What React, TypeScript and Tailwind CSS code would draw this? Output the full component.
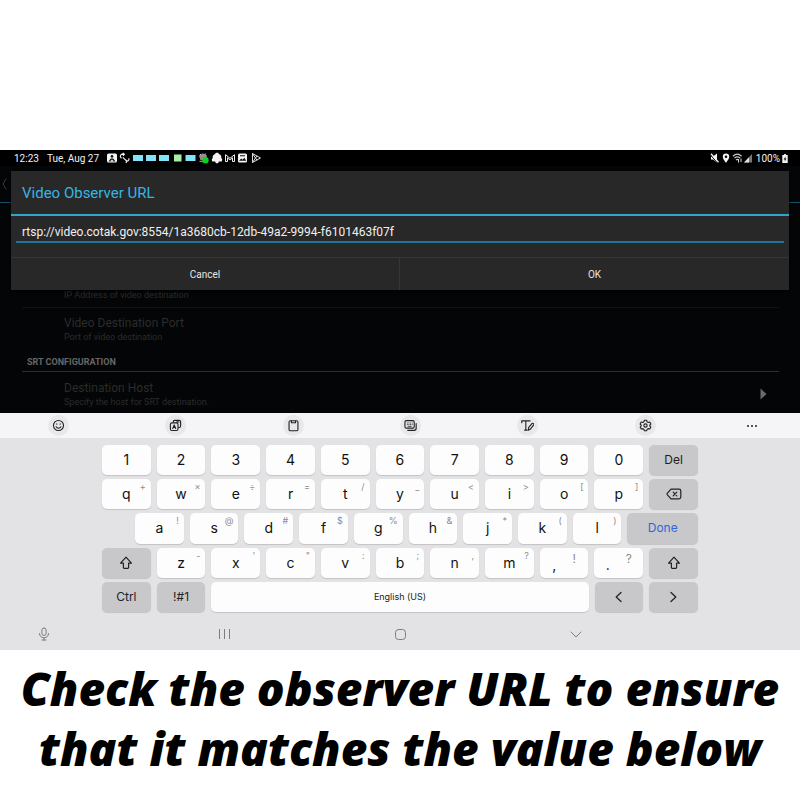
import React from "react";

type KeyDef = { label: string; hint?: string };

const digits: KeyDef[] = "1234567890".split("").map((label) => ({ label }));

const pair = (letters: string, hints: string[]): KeyDef[] =>
  letters.split("").map((label, i) => ({ label, hint: hints[i] }));

const topRow = pair("qwertyuiop", ["+", "×", "÷", "=", "/", "_", "<", ">", "[", "]"]);
const homeRow = pair("asdfghjkl", ["!", "@", "#", "$", "%", "&", "*", "(", ")"]);
const bottomRow = pair("zxcvbnm", ["-", "'", "\"", ":", ";", ",", "?"]);

const keyBase =
  "relative flex items-center justify-center rounded-[5px] shadow-[0_1px_1px_rgba(0,0,0,0.14)]";
const keyUnit = "w-[calc((100%-60px)/11)] shrink-0";

function Key({ label, hint }: KeyDef) {
  return (
    <button type="button" className={`${keyBase} ${keyUnit} bg-[#fdfdfe] text-[14px] leading-none text-[#111]`}>
      {label}
      {hint && <span className="absolute right-[5px] top-[3px] text-[9px] leading-none text-[#8c8c8e]">{hint}</span>}
    </button>
  );
}

function PunctuationKey({ label, hint }: KeyDef) {
  return (
    <button
      type="button"
      className={`${keyBase} ${keyUnit} gap-4 bg-[#fdfdfe] text-[14px] leading-none text-[#111]`}
    >
      <span className="pt-1">{label}</span>
      <span className="pb-2 text-[12px] text-[#8c8c8e]">{hint}</span>
    </button>
  );
}

function DarkKey({
  children,
  label,
  grow,
  accent,
}: {
  children: React.ReactNode;
  label?: string;
  grow?: boolean;
  accent?: boolean;
}) {
  return (
    <button
      type="button"
      aria-label={label}
      className={`${keyBase} ${grow ? "flex-1" : keyUnit} ${
        accent ? "text-[#2f66dd]" : "text-[#222]"
      } bg-[#c8c8ca] text-[12px] leading-none`}
    >
      {children}
    </button>
  );
}

const stroke = {
  fill: "none",
  stroke: "currentColor",
  strokeLinecap: "round",
  strokeLinejoin: "round",
} as const;

const ShiftIcon = () => (
  <svg viewBox="0 0 14 14" className="size-3.5" {...stroke} strokeWidth="1.2">
    <path d="M7 1.2 12.4 7.2H9.6V11.6a.8.8 0 0 1-.8.8H5.2a.8.8 0 0 1-.8-.8V7.2H1.6Z" />
  </svg>
);

const toolIcons: { name: string; art: React.ReactNode }[] = [
  {
    name: "Emoji",
    art: (
      <>
        <circle cx="7" cy="7" r="5.4" />
        <path d="M4.4 8.4c.6 1 1.500 1.500 2.600 1.500s2-.5 2.600-1.500" />
        <path d="M5.200 5.200v.5M8.800 5.200v.5" />
      </>
    ),
  },
  {
    name: "Translate",
    art: (
      <>
        <path d="M4.600 3.600V3c0-.9.600-1.500 1.500-1.500h4.900c.9 0 1.500.600 1.500 1.500v4.600c0 .9-.600 1.500-1.500 1.500h-.6" />
        <rect x="1.500" y="4.200" width="8.200" height="8.200" rx="1.600" />
        <path d="M4 10.200 5.600 6.400 7.200 10.200M4.500 9.200h2.200M8 3.300h2.700M9.400 2.700v.6" />
      </>
    ),
  },
  {
    name: "Clipboard",
    art: (
      <>
        <rect x="2.200" y="1.900" width="9.600" height="10.800" rx="1.500" />
        <path d="M4.800 2.100v1.900h4.400V2.100" />
      </>
    ),
  },
  {
    name: "Keyboard modes",
    art: (
      <>
        <rect x="1" y="1.800" width="10" height="8" rx="1.500" />
        <path d="M4 12.200h6.900c1.300 0 2.200-.9 2.200-2.200V4.800" />
        <path d="M3.500 4.300h.2M5.200 4.300h.2M6.900 4.300h.2M8.700 4.300h.2M3.500 6h.2M5.200 6h.2M6.900 6h.2M8.700 6h.2M4.400 7.900h3.400" strokeWidth="0.900" />
      </>
    ),
  },
  {
    name: "Handwriting",
    art: (
      <>
        <path d="M.8 4V2h9M5.200 2v10M3.900 12h2.700" />
        <path d="m7.800 12 .5-2.900 3.500-4.200c1.100-.8 2.500.5 1.700 1.600l-3.600 4.600Z" />
      </>
    ),
  },
  {
    name: "Settings",
    art: (
      <>
        <path d="M5.800 1.300h2.400l.5 1.700 1.200.7 1.700-.4 1.200 2.100L11.600 6.600v.9l1.200 1.200-1.200 2.100-1.700-.4-1.200.7-.5 1.600H5.800l-.5-1.600-1.200-.7-1.700.4-1.200-2.100 1.200-1.200v-.9L1.200 5.400l1.200-2.100 1.700.4L5.300 3Z" />
        <circle cx="7" cy="7" r="1.800" />
      </>
    ),
  },
];

function StatusBar() {
  return (
    <div className="flex h-4 items-center justify-between bg-black pl-3.5 pr-3 font-[Roboto,sans-serif] text-[10px] text-[#f2f2f2]">
      <div className="flex items-center">
        <span className="w-[33px]">12:23</span>
        <span className="w-[59px]">Tue, Aug 27</span>
        <svg viewBox="0 0 156 12" className="h-3 w-[156px]" aria-hidden="true">
          <rect x="1" y="1.500" width="10" height="9" rx="1.500" fill="#f4f4f4" />
          <circle cx="6" cy="4.400" r="1.300" fill="#111" />
          <path d="M2.500 9.500 4.700 6.500h2.600L9.500 9.500Z" fill="#111" />
          <path d="m3.900 9.500 2.100-2 2 2" fill="#f4f4f4" />
          <path
            d="M15.500 6.200c-1.600-1-1.500-3.200.2-4l2.500.2M16.800 1 18.300 2.400 17 3.900M16.800 5.400l4 3.800c1.600-.1 2.500-1.500 2-3M20.500 7.800l.3 1.500-1 1.500"
            fill="none"
            stroke="#eee"
            strokeWidth="1.200"
          />
          <path d="M27 3h10v6H27zM40 3h10v6H40zM53 3h10v6H53zM79.500 3h10v6h-10z" fill="#83e3fb" />
          <path d="M68 2.500h7.500v7H68z" fill="#a9f0a4" />
          <path d="M93 3.600 97 1.200l4 2.200-1 4.600h-5.600Z" fill="#8e8e8e" />
          <path d="m94 2 1.500 1.500M99.700 1.500l-1 1.600M93.500 9.300h5" stroke="#bbb" strokeWidth="1" />
          <circle cx="99.500" cy="8.300" r="3.200" fill="#0bd21c" />
          <path
            d="M111 .8c1.100 0 1.900.6 2.200 1.500 1.600.4 2.300 1.800 2.100 3.400l1 2-.6 1.700h-2.900c-.2 1.300-.9 1.900-1.800 1.900s-1.600-.6-1.800-1.900h-2.900l-.6-1.700 1-2c-.2-1.600.5-3 2.100-3.400.3-.9 1.100-1.500 2.200-1.500Z"
            fill="#f4f4f4"
          />
          <path
            d="M119.500 9.500V2.700l4.500 3.600 4.500-3.600v6.800h-2V5.800L124 8l-2.500-2.200v3.700Z"
            fill="none"
            stroke="#eee"
            strokeWidth="1"
            strokeLinejoin="round"
          />
          <rect x="132" y="1.500" width="9" height="9" rx="1.500" fill="#f4f4f4" />
          <path d="m133 8.800 2.200-2.300 1.400 1.200 1.700-2 2 3.100ZM134 3.300h5v1h-5z" fill="#111" />
          <path d="M146.500 1.500v9l8-4.500ZM146.500 1.500l4.500 6.700M146.500 10.500 151 3.800" fill="none" stroke="#ddd" strokeWidth="1" />
        </svg>
      </div>
      <div className="flex items-center gap-[2px]">
        <svg viewBox="0 0 44 12" className="h-3 w-11" aria-hidden="true">
          <path d="M1 4.500h2L7 1.500v9L3 7.500H1Z" fill="#f4f4f4" />
          <path d="M0 2.500 8 11.500" stroke="#000" strokeWidth="1" />
          <path d="m1 1.800 7.500 8.500" stroke="#f4f4f4" strokeWidth="1.300" />
          <path
            d="M16 1.500a3.200 3.200 0 0 1 3.200 3.200c0 2.300-3.200 6-3.200 6s-3.200-3.700-3.200-6A3.200 3.200 0 0 1 16 1.500Zm0 2a1.300 1.300 0 1 0 0 2.600 1.300 1.300 0 0 0 0-2.600Z"
            fill="#f4f4f4"
          />
          <path d="M23 4.200c2.600-2.400 6-2.400 8.600 0M24.500 6.100c1.700-1.500 4-1.500 5.700 0M26 8c.8-.7 1.900-.7 2.600 0" fill="none" stroke="#c8c8c8" strokeWidth="1.200" />
          <path d="M28.500 7v3.500M31 6.500V10" stroke="#ddd" strokeWidth="1" />
          <path d="M42 2v8.500h-8Z" fill="#777" />
          <path d="M39 5.200v5.300h-5Z" fill="#e0e0e0" />
        </svg>
        <span>100%</span>
        <svg viewBox="0 0 6 10" className="h-[9px] w-[6px]" aria-hidden="true">
          <path d="M2 0h2v1h2v9H0V1h2Z" fill="#f4f4f4" />
          <path d="M3.600 2.500 1.500 6h1.300v2.300L4.600 5H3.300Z" fill="#111" />
        </svg>
      </div>
    </div>
  );
}

function SettingsScreen() {
  return (
    <div className="flex h-full flex-col font-[Roboto,sans-serif] text-[#2b2c2d]">
      <div className="flex h-[37px] items-center border-b border-[#155068] pl-[2px]">
        <svg viewBox="0 0 5 12" className="h-3 w-[5px]" {...stroke} stroke="#3a3a3a" aria-hidden="true">
          <path d="M4 1 1 6l3 5" />
        </svg>
      </div>
      <div className="mt-auto pl-[22px] pr-[21px]">
        <div className="border-b border-[#101112] pb-[6px] pl-[42px] text-[9px] leading-3">
          IP Address of video destination
        </div>
        <div className="pl-[42px] pt-[7px]">
          <div className="text-[12px] leading-4">Video Destination Port</div>
          <div className="text-[9px] leading-3">Port of video destination</div>
        </div>
        <h2 className="mt-[13px] border-b border-[#2e2f30] pb-[3px] pl-[5px] text-[9px] font-bold leading-3 text-[#666768]">
          SRT CONFIGURATION
        </h2>
        <div className="flex items-center justify-between pb-[5px] pl-[42px] pr-3 pt-2">
          <div>
            <div className="text-[12px] leading-4">Destination Host</div>
            <div className="text-[9px] leading-3">Specify the host for SRT destination.</div>
          </div>
          <svg viewBox="0 0 7 12" className="h-3 w-[7px]" aria-hidden="true">
            <path d="M.5.5 6.500 6l-6 5.500Z" fill="#6a6a6a" />
          </svg>
        </div>
      </div>
    </div>
  );
}

function UrlDialog() {
  return (
    <form
      role="dialog"
      aria-labelledby="dialog-title"
      onSubmit={(e) => e.preventDefault()}
      className="absolute inset-x-[11px] top-[5px] bg-[#282828] font-[Roboto,sans-serif] shadow-[0_1px_3px_rgba(0,0,0,0.8)]"
    >
      <label
        id="dialog-title"
        htmlFor="observer-url"
        className="flex h-[45px] items-center border-b-2 border-[#33a4cb] pl-[11px] pt-[2px] text-[15px] text-[#35b5e5]"
      >
        Video Observer URL
      </label>
      <div className="px-[5px] pb-[14px] pt-[7px]">
        <input
          id="observer-url"
          type="text"
          defaultValue="rtsp://video.cotak.gov:8554/1a3680cb-12db-49a2-9994-f6101463f07f"
          className="block h-5 w-full border-b-2 border-[#1b7796] bg-transparent px-[6px] text-[12px] text-[#f0f0f0] outline-none"
        />
      </div>
      <div className="grid h-[33px] grid-cols-2 border-t border-[#363636] text-[10px] text-[#e6e6e6]">
        <button type="button" className="border-r border-[#363636]">
          Cancel
        </button>
        <button type="submit">OK</button>
      </div>
    </form>
  );
}

function Keyboard() {
  return (
    <div className="bg-[#e3e3e5]">
      <div className="grid h-[25px] grid-cols-[repeat(6,22fr)_18fr] items-center justify-items-center bg-[#f5f5f8] text-[#222]">
        {toolIcons.map((t) => (
          <button
            key={t.name}
            type="button"
            aria-label={t.name}
            className="flex size-[21px] items-center justify-center rounded-full bg-[#e8e8ea]"
          >
            <svg viewBox="0 0 14 14" className="size-[13px]" {...stroke} strokeWidth="1.200">
              {t.art}
            </svg>
          </button>
        ))}
        <button type="button" aria-label="More">
          <svg viewBox="0 0 10 2" className="h-[2px] w-[10px]" fill="currentColor">
            <circle cx="1" cy="1" r="1" />
            <circle cx="5" cy="1" r="1" />
            <circle cx="9" cy="1" r="1" />
          </svg>
        </button>
      </div>

      <div className="mx-[12.75%] mt-[7px] grid h-[167px] grid-rows-5 gap-1">
        <div className="flex gap-[6px]">
          {digits.map((k) => (
            <Key key={k.label} {...k} />
          ))}
          <DarkKey>Del</DarkKey>
        </div>
        <div className="flex gap-[6px]">
          {topRow.map((k) => (
            <Key key={k.label} {...k} />
          ))}
          <DarkKey label="Backspace">
            <svg viewBox="0 0 16 12" className="h-3 w-4" {...stroke} strokeWidth="1.200">
              <path d="M5 1.200h8c1.100 0 1.800.7 1.800 1.800v6c0 1.100-.7 1.800-1.800 1.800H5L1.200 6.600a1 1 0 0 1 0-1.200Z" />
              <path d="m7.200 4.200 3.600 3.600M10.800 4.200 7.200 7.800" />
            </svg>
          </DarkKey>
        </div>
        <div className="flex gap-[6px]">
          <div className="w-[27px] shrink-0" />
          {homeRow.map((k) => (
            <Key key={k.label} {...k} />
          ))}
          <DarkKey grow accent>
            Done
          </DarkKey>
        </div>
        <div className="flex gap-[6px]">
          <DarkKey label="Left shift">
            <ShiftIcon />
          </DarkKey>
          {bottomRow.map((k) => (
            <Key key={k.label} {...k} />
          ))}
          <PunctuationKey label="," hint="!" />
          <PunctuationKey label="." hint="?" />
          <DarkKey label="Right shift">
            <ShiftIcon />
          </DarkKey>
        </div>
        <div className="flex gap-[6px]">
          <DarkKey>Ctrl</DarkKey>
          <DarkKey>!#1</DarkKey>
          <button type="button" className={`${keyBase} flex-1 bg-[#fdfdfe] text-[9px] text-[#222]`}>
            English (US)
          </button>
          <DarkKey label="Move left">
            <svg viewBox="0 0 7 12" className="h-3 w-[7px]" {...stroke} strokeWidth="1.300">
              <path d="M6 1.500 1.200 6 6 10.500" />
            </svg>
          </DarkKey>
          <DarkKey label="Move right">
            <svg viewBox="0 0 7 12" className="h-3 w-[7px]" {...stroke} strokeWidth="1.300">
              <path d="M1 1.500 5.800 6 1 10.500" />
            </svg>
          </DarkKey>
        </div>
      </div>

      <nav className="grid h-[38px] grid-cols-[11%_6%_22%_22%_22%_1fr] items-center justify-items-center pt-[6px] text-[#7d7d7f]">
        <button type="button" aria-label="Voice input">
          <svg viewBox="0 0 12 14" className="h-3.5 w-3" {...stroke}>
            <rect x="3.900" y="1" width="4.200" height="7.500" rx="2.100" />
            <path d="M1.500 6.500c0 2.700 1.900 4.300 4.500 4.300s4.500-1.600 4.500-4.300M6 10.800V13M4 13h4" />
          </svg>
        </button>
        <span />
        <button type="button" aria-label="Recent apps">
          <svg viewBox="0 0 11 10" className="h-[10px] w-[11px]" {...stroke} strokeLinecap="butt">
            <path d="M.5 0v10M5.500 0v10M10.500 0v10" />
          </svg>
        </button>
        <button type="button" aria-label="Home">
          <svg viewBox="0 0 11 11" className="size-[11px]" {...stroke}>
            <rect x=".5" y=".5" width="10" height="10" rx="3" />
          </svg>
        </button>
        <button type="button" aria-label="Hide keyboard">
          <svg viewBox="0 0 12 7" className="h-[7px] w-3" {...stroke}>
            <path d="m1 1 5 5 5-5" />
          </svg>
        </button>
      </nav>
    </div>
  );
}

export default function App() {
  return (
    <main className="min-h-screen bg-white pt-[150px] font-[Inter,sans-serif]">
      <section aria-label="Tablet">
        <StatusBar />
        <div className="relative h-[247px] bg-[#040506]">
          <SettingsScreen />
          <UrlDialog />
        </div>
        <Keyboard />
      </section>
      <h1 className="pt-2 text-center font-['Open_Sans',sans-serif] text-[46px] font-extrabold italic leading-[60px] text-black">
        <span className="block">Check the observer URL to ensure</span>
        <span className="block">that it matches the value below</span>
      </h1>
    </main>
  );
}
